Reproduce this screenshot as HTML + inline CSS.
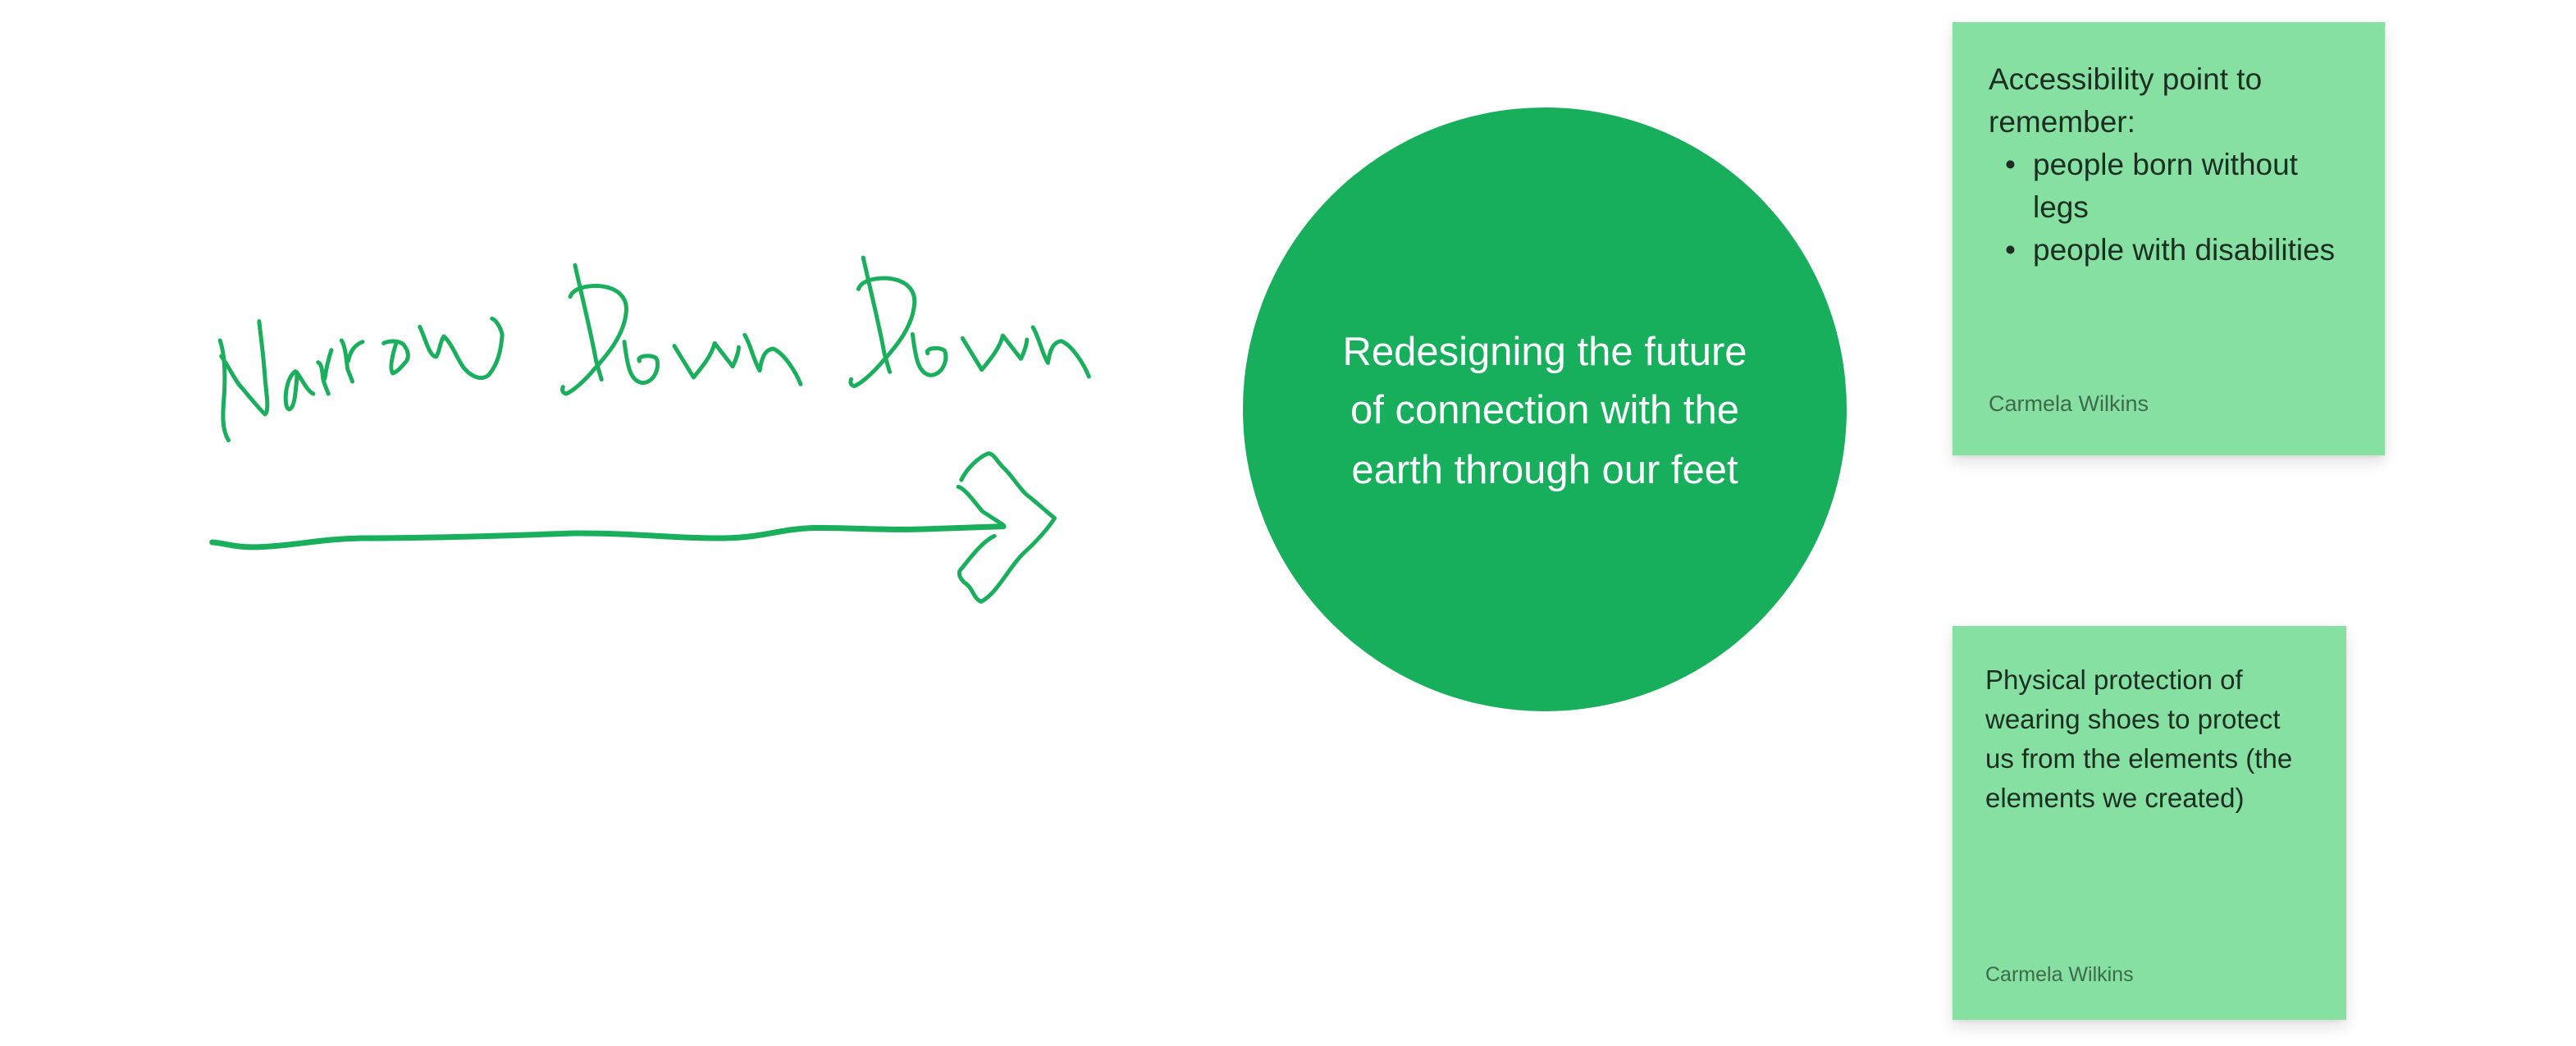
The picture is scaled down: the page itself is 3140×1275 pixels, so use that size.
<!DOCTYPE html>
<html><head><meta charset="utf-8"><style>
html,body{margin:0;padding:0;background:#fff;width:3140px;height:1275px;overflow:hidden;position:relative;font-family:"Liberation Sans",sans-serif}
.note{position:absolute;background:#86e0a2;box-shadow:0 8px 18px rgba(0,0,0,0.12),0 2px 4px rgba(0,0,0,0.06)}
.t{position:absolute;color:#1c2e22;white-space:nowrap}
.a{position:absolute;color:#3e6a4c;white-space:nowrap}
.circ{position:absolute;left:1515px;top:131px;width:736px;height:736px;border-radius:50%;background:#17ae5c}
.ct{position:absolute;color:#fff;font-size:49px;width:736px;text-align:center;left:0}
</style></head><body>
<svg style="position:absolute;left:200px;top:280px" width="1150" height="480" viewBox="0 0 1568 1440" preserveAspectRatio="none">
<g fill="none" stroke="#1aaf5d" stroke-linecap="round" stroke-linejoin="round" stroke-width="5" vector-effect="non-scaling-stroke">
<path vector-effect="non-scaling-stroke" d="M93,405 C100,450 102,520 100,600 C97,680 96,730 107,770"/>
<path vector-effect="non-scaling-stroke" d="M95,462 C110,510 120,560 130,580 C145,620 160,660 168,675 C175,660 170,600 168,550 C165,450 160,380 158,335"/>
<path vector-effect="non-scaling-stroke" d="M218,518 C205,540 200,600 203,640 C206,670 215,660 218,600 C220,560 222,530 220,520 C230,550 238,590 248,600"/>
<path vector-effect="non-scaling-stroke" d="M256,485 C265,495 262,540 266,560 L273,600 M267,545 C270,500 275,460 278,440"/>
<path vector-effect="non-scaling-stroke" d="M295,405 C302,430 303,480 305,510 L313,555 M306,480 C310,440 318,420 330,410"/>
<path vector-effect="non-scaling-stroke" d="M365,415 C375,405 390,405 398,420 C405,440 408,460 403,480 C395,500 388,520 380,525 C375,510 378,470 385,420"/>
<path vector-effect="non-scaling-stroke" d="M425,355 C435,400 440,460 452,465 C458,450 458,410 465,390 C480,420 488,480 500,510 C515,545 530,550 540,530 C555,490 560,440 562,385 C560,360 552,330 545,325"/>
<g id="down">
<path vector-effect="non-scaling-stroke" d="M683,130 C695,250 710,380 718,480 L727,548"/>
<path vector-effect="non-scaling-stroke" d="M675,245 C680,215 700,205 720,205 C760,210 770,260 768,300 C765,380 740,450 715,510 C700,550 680,590 668,600 C660,595 662,580 663,575"/>
<path vector-effect="non-scaling-stroke" d="M790,480 C785,460 810,455 818,470 C825,500 815,560 795,560 C775,555 770,500 765,410"/>
<path vector-effect="non-scaling-stroke" d="M848,425 L880,540 C895,500 910,460 915,415 L945,500 C952,470 955,440 955,430"/>
<path vector-effect="non-scaling-stroke" d="M965,385 C975,420 980,480 990,515 C993,470 998,440 1012,435 C1030,450 1050,520 1058,565"/>
</g>
<use href="#down" transform="translate(479,-28)"/>
<path vector-effect="non-scaling-stroke" stroke-width="7" d="M80,1143 C100,1145 120,1165 160,1160 C220,1155 260,1130 330,1128 C450,1127 560,1120 680,1110 C780,1108 850,1130 930,1128 C1000,1125 1020,1095 1080,1090 C1150,1090 1200,1100 1260,1095 L1395,1085"/>
<path vector-effect="non-scaling-stroke" d="M1325,915 C1335,870 1355,830 1370,818 C1380,820 1385,850 1395,870 C1410,900 1425,960 1440,980 L1480,1055 C1470,1090 1450,1140 1430,1180 C1405,1230 1385,1330 1358,1360 C1345,1350 1345,1310 1330,1290 C1320,1270 1320,1250 1325,1240 C1340,1200 1360,1140 1380,1120"/>
<path vector-effect="non-scaling-stroke" d="M1320,940 C1330,945 1345,990 1360,1030 L1395,1080"/>
</g></svg>

<div class="circ">
<div class="ct" style="top:272px;line-height:52px">Redesigning the future</div>
<div class="ct" style="top:343px;line-height:52px">of connection with the</div>
<div class="ct" style="top:416px;line-height:52px">earth through our feet</div>
</div>

<div class="note" style="left:2380px;top:27px;width:527px;height:528px">
<div class="t" style="left:44px;top:44px;font-size:37px;line-height:52px">Accessibility point to<br>remember:</div>
<div class="t" style="left:64px;top:148px;font-size:37px;line-height:52px">•</div>
<div class="t" style="left:98px;top:148px;font-size:37px;line-height:52px">people born without<br>legs</div>
<div class="t" style="left:64px;top:252px;font-size:37px;line-height:52px">•</div>
<div class="t" style="left:98px;top:252px;font-size:37px;line-height:52px">people with disabilities</div>
<div class="a" style="left:44px;top:450px;font-size:27px;line-height:30px">Carmela Wilkins</div>
</div>

<div class="note" style="left:2380px;top:763px;width:480px;height:480px">
<div class="t" style="left:40px;top:42px;font-size:33px;line-height:48px">Physical protection of<br>wearing shoes to protect<br>us from the elements (the<br>elements we created)</div>
<div class="a" style="left:40px;top:410px;font-size:25px;line-height:30px">Carmela Wilkins</div>
</div>
</body></html>
